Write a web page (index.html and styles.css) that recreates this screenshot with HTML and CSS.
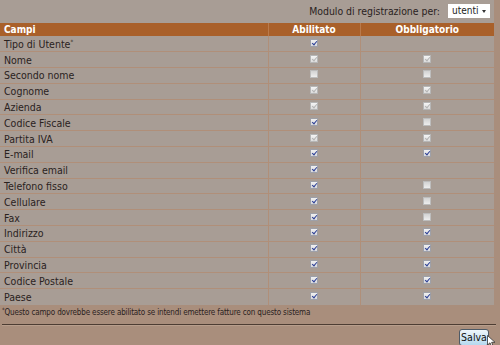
FILE: index.html
```html
<!DOCTYPE html>
<html lang="it">
<head>
<meta charset="utf-8">
<title>Modulo di registrazione</title>
<link rel="stylesheet" href="styles.css">
</head>
<body>
<div class="page">
  <div class="panel">
    <div class="topbar">
      <span class="toplabel">Modulo di registrazione per:</span>
      <span class="select">utenti<span class="arrow"></span></span>
    </div>
    <table class="fields">
      <colgroup><col class="c1"><col class="c2"><col class="c3"></colgroup>
      <thead>
        <tr><th class="left">Campi</th><th>Abilitato</th><th>Obbligatorio</th></tr>
      </thead>
      <tbody>
        <tr><td>Tipo di Utente<sup>*</sup></td><td><span class="cb on"></span></td><td></td></tr>
        <tr><td>Nome</td><td><span class="cb dis"></span></td><td><span class="cb dis"></span></td></tr>
        <tr><td>Secondo nome</td><td><span class="cb off"></span></td><td><span class="cb off"></span></td></tr>
        <tr><td>Cognome</td><td><span class="cb dis"></span></td><td><span class="cb dis"></span></td></tr>
        <tr><td>Azienda</td><td><span class="cb dis"></span></td><td><span class="cb dis"></span></td></tr>
        <tr><td>Codice Fiscale</td><td><span class="cb on"></span></td><td><span class="cb off"></span></td></tr>
        <tr><td>Partita IVA</td><td><span class="cb dis"></span></td><td><span class="cb dis"></span></td></tr>
        <tr><td>E-mail</td><td><span class="cb on"></span></td><td><span class="cb on"></span></td></tr>
        <tr><td>Verifica email</td><td><span class="cb on"></span></td><td></td></tr>
        <tr><td>Telefono fisso</td><td><span class="cb on"></span></td><td><span class="cb off"></span></td></tr>
        <tr><td>Cellulare</td><td><span class="cb on"></span></td><td><span class="cb off"></span></td></tr>
        <tr><td>Fax</td><td><span class="cb on"></span></td><td><span class="cb off"></span></td></tr>
        <tr><td>Indirizzo</td><td><span class="cb on"></span></td><td><span class="cb on"></span></td></tr>
        <tr><td>Città</td><td><span class="cb on"></span></td><td><span class="cb on"></span></td></tr>
        <tr><td>Provincia</td><td><span class="cb on"></span></td><td><span class="cb on"></span></td></tr>
        <tr><td>Codice Postale</td><td><span class="cb on"></span></td><td><span class="cb on"></span></td></tr>
        <tr><td>Paese</td><td><span class="cb on"></span></td><td><span class="cb on"></span></td></tr>
      </tbody>
    </table>
  </div>
  <p class="note"><sup>*</sup>Questo campo dovrebbe essere abilitato se intendi emettere fatture con questo sistema</p>
  <div class="rule"></div>
  <div class="actions">
    <button class="save" type="button">Salva</button>
    <svg class="cursor" width="9" height="13" viewBox="0 0 9 13"><path d="M0.5 0.5 L0.5 10 L3 7.8 L4.8 12 L6.3 11.3 L4.6 7.3 L8 7.3 Z" fill="#fff" stroke="#333" stroke-width="0.8"/></svg>
  </div>
</div>
</body>
</html>
```
FILE: styles.css
```css
* { box-sizing: border-box; }
html, body { margin: 0; padding: 0; }
body {
  width: 500px;
  height: 345px;
  overflow: hidden;
  background: #a98e7c;
  font-family: "DejaVu Sans Condensed", "DejaVu Sans", Verdana, sans-serif;
  font-size: 10px;
  color: #2a221e;
}
.page { width: 500px; height: 345px; }
.panel {
  width: 494px;
  background: #a89d95;
}
.topbar {
  height: 23px;
  display: flex;
  justify-content: flex-end;
  align-items: center;
  gap: 8px;
  padding: 0 4px 2px 0;
}
.toplabel { color: #2a221e; font-size: 10.4px; }
.select {
  position: relative;
  flex-shrink: 0;
  display: inline-flex;
  align-items: center;
  width: 42px;
  height: 14px;
  background: #fff;
  padding-left: 4px;
  color: #222;
}
.arrow {
  position: absolute;
  right: 4px;
  top: 6px;
  border-left: 2.5px solid transparent;
  border-right: 2.5px solid transparent;
  border-top: 3px solid #333;
}
.fields {
  width: 494px;
  border-collapse: collapse;
  table-layout: fixed;
}
.c1 { width: 268px; }
.c2 { width: 92px; }
.c3 { width: 134px; }
.fields th {
  background: #a9602a;
  color: #fff;
  font-weight: bold;
  height: 13px;
  padding: 0;
  text-align: center;
  border-left: 1px solid #b97a4c;
  line-height: 13px;
}
.fields th.left { text-align: left; padding-left: 4px; border-left: none; }
.fields td {
  height: 15.8px;
  padding: 0;
  text-align: center;
  border-top: 1px solid #b08f79;
  border-left: 1px solid #b08f79;
  line-height: 14px;
}
.fields td:first-child {
  text-align: left;
  padding-left: 4px;
  border-left: none;
  font-size: 10.5px;
}
.fields tbody tr:first-child td { border-top: none; }
sup { font-size: 6px; vertical-align: 4px; line-height: 0; }
.cb {
  display: inline-block;
  width: 8px;
  height: 8px;
  vertical-align: middle;
  border: 1px solid #b6b6b6;
  background: linear-gradient(#f4f4f4, #dcdcdc);
  position: relative;
  top: -1px;
}
.cb.off { background: linear-gradient(#d2d2d2, #ededed); border-color: #bdbdbd; }
.cb.on::after, .cb.dis::after {
  content: "";
  position: absolute;
  left: 2px;
  top: 0px;
  width: 2px;
  height: 4px;
  border-right: 1.5px solid #2b3f96;
  border-bottom: 1.5px solid #2b3f96;
  transform: rotate(40deg);
}
.cb.dis::after { border-color: #b4b4b4; }
.cb.on { background: linear-gradient(#f0f0f0, #d8d8dc); border-color: #9ea0a8; }
.note {
  margin: 0;
  height: 19px;
  padding: 3px 0 0 2px;
  font-size: 8px;
  line-height: 10px;
  letter-spacing: -0.15px;
}
.note sup { font-size: 6px; vertical-align: 3px; }
.rule {
  width: 494px;
  margin-left: 2px;
  height: 2px;
  border-top: 1px solid #4d3d33;
  border-bottom: 1px solid #b89e8c;
}
.actions {
  position: relative;
  display: flex;
  justify-content: flex-end;
  padding: 3px 11px 0 0;
}
.save {
  width: 30px;
  height: 17px;
  padding: 0;
  font-family: "DejaVu Sans Condensed", "DejaVu Sans", sans-serif;
  font-size: 10.5px;
  color: #111;
  border: 1px solid #4e5a66;
  border-radius: 3px;
  background: linear-gradient(#eef6fb, #b6d9ef);
}
.cursor {
  position: absolute;
  right: 4px;
  top: 9px;
}
```
